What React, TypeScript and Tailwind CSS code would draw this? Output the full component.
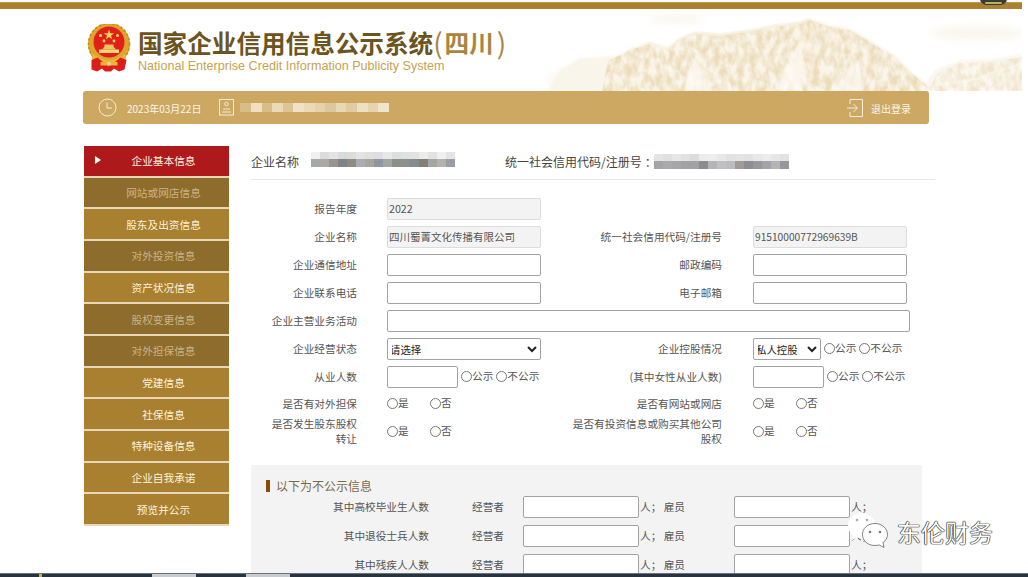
import React from "react";

const font = '"Noto Sans CJK SC", "Liberation Sans", sans-serif';

const menu: [string, number][] = [
  ["企业基本信息", 0], ["网站或网店信息", 2], ["股东及出资信息", 1], ["对外投资信息", 2],
  ["资产状况信息", 1], ["股权变更信息", 2], ["对外担保信息", 2], ["党建信息", 1],
  ["社保信息", 1], ["特种设备信息", 1], ["企业自我承诺", 1], ["预览并公示", 1],
];

function Pixels({ top, bottom, size = 9 }: { top: string[]; bottom: string[]; size?: number }) {
  return (
    <div className="flex flex-col">
      {[top, bottom].map((row, i) => (
        <div key={i} className="flex">
          {row.map((c, j) => (
            <div key={j} style={{ background: c, width: size, height: i === 0 ? 7 : 8 }} />
          ))}
        </div>
      ))}
    </div>
  );
}

function Radio({ label, className = "" }: { label: string; className?: string }) {
  return (
    <label className={"flex items-center text-[10.67px] leading-[14px] text-[#555] -translate-y-px " + className}>
      <input type="radio" name={label + className} className="m-0 h-[11px] w-[11px]" />
      {label}
    </label>
  );
}

function PublicRadios({ ml = "ml-[3px]" }: { ml?: string }) {
  return (
    <div className={"flex gap-[3px] " + ml}>
      <Radio label="公示" />
      <Radio label="不公示" />
    </div>
  );
}

function YesNo() {
  return (
    <div className="flex">
      <Radio label="是" className="w-[43px]" />
      <Radio label="否" />
    </div>
  );
}

const inputCls = "block h-[22px] rounded-[2px] border border-[#a3a3a3] bg-white px-0 text-[10.67px] text-[#444] outline-none";
const selectCls = "block h-[22px] rounded-[2px] border border-[#a3a3a3] bg-white px-0 indent-[-2px] text-[10.4px] text-[#222] outline-none";
const roCls = "block h-[22px] rounded-[2px] border border-[#dcdcdc] bg-[#f3f3f3] pb-[2px] pl-[1px] leading-[18px] text-[#555] outline-none";

function Row({ h = 28, children }: { h?: number; children: React.ReactNode }) {
  return <div className="flex items-center" style={{ height: h }}>{children}</div>;
}

function L1({ children }: { children: React.ReactNode }) {
  return <div className="mr-[30px] w-[106px] shrink-0 -translate-y-px text-right text-[10.67px] leading-[15px] text-[#555]">{children}</div>;
}
function L2({ children }: { children: React.ReactNode }) {
  return <div className="mr-[31px] w-[181px] shrink-0 -translate-y-px text-right text-[10.67px] leading-[15px] text-[#555]">{children}</div>;
}
function Cell({ children }: { children?: React.ReactNode }) {
  return <div className="flex w-[154px] shrink-0 items-center">{children}</div>;
}

function PanelRow({ label }: { label: string }) {
  return (
    <div className="flex h-[29.300px] items-center text-[10.67px] text-[#555]">
      <div className="mr-[43px] w-[178px] shrink-0 text-right">{label}</div>
      <div className="mr-[19px] w-[32px] shrink-0">经营者</div>
      <input className={inputCls + " w-[116px]"} />
      <div className="ml-[1px] w-[94px] shrink-0">人； 雇员</div>
      <input className={inputCls + " w-[116px]"} />
      <div className="ml-[1px]">人；</div>
    </div>
  );
}

function Emblem() {
  return (
    <svg width="44" height="48" viewBox="0 0 44 48" className="shrink-0">
      <circle cx="22" cy="20" r="21" fill="#e0a62c" />
      <circle cx="22" cy="20" r="20.5" fill="none" stroke="#c08a1e" strokeWidth="1.5" strokeDasharray="2.500 2" />
      <circle cx="22" cy="18" r="15.500" fill="#e2201a" />
      <polygon points="22,5.500 23.200,9.200 27.200,9.200 24,11.500 25.200,15.200 22,13 18.800,15.200 20,11.500 16.800,9.200 20.800,9.200" fill="#f8dc5a" />
      <circle cx="13.500" cy="11.500" r="1.500" fill="#f8dc5a" />
      <circle cx="30.500" cy="11.500" r="1.500" fill="#f8dc5a" />
      <circle cx="17" cy="17" r="1.400" fill="#f8dc5a" />
      <circle cx="27" cy="17" r="1.400" fill="#f8dc5a" />
      <path d="M15 25.500h14l-2.500-3v-2h-9v2z" fill="#edc561" />
      <rect x="12" y="25.500" width="20" height="3.500" fill="#f4d67c" />
      <path d="M6 30q16 12 32 0l1.500 5q-17.500 10-35 0z" fill="#eab53a" />
      <path d="M4.500 36l6-2.500 5.500 4.500h12l5.500-4.500 6 2.500-2 9.500-5.500 2-5-3-3 3h-6l-3-3-5 3-5.500-2z" fill="#dc1e1a" />
      <rect x="13.500" y="38" width="17" height="3.500" fill="#eab53a" />
      <circle cx="22" cy="39.700" r="2" fill="#f4d67c" />
    </svg>
  );
}

function Mountains() {
  return (
    <svg width="490" height="82" viewBox="0 0 490 82" className="absolute right-[6px] top-0">
      <defs>
        <filter id="soft"><feGaussianBlur stdDeviation="0.8" /></filter>
        <filter id="mist"><feGaussianBlur stdDeviation="4" /></filter>
        <filter id="rock" x="0" y="0" width="100%" height="100%">
          <feTurbulence type="fractalNoise" baseFrequency="0.16 0.09" numOctaves="3" seed="7" result="n" />
          <feColorMatrix in="n" type="matrix" values="0 0 0 0 0  0 0 0 0 0  0 0 0 0 0  2.400 0 0 0 -0.750" result="a" />
          <feComposite in="SourceGraphic" in2="a" operator="in" />
          <feGaussianBlur stdDeviation="0.7" />
        </filter>
      </defs>
      <g filter="url(#mist)">
        <ellipse cx="145" cy="10" rx="28" ry="2.500" fill="#f6efdf" />
        <ellipse cx="445" cy="24" rx="48" ry="6" fill="#faf5ea" />
        <ellipse cx="40" cy="72" rx="26" ry="10" fill="#fbf7ee" />
      </g>
      <g filter="url(#soft)">
        <path d="M16 82 L28 61 L48 49 L68 48 L88 46 L98 39 L118 33 L128 39 L136 39 L148 29 L163 23 L188 25 L218 21 L243 16 L268 13 L278 9 L298 16 L318 19 L338 31 L363 46 L378 61 L393 73 L400 82Z" fill="#faf5ea" />
        <path d="M388 82 L403 61 L428 51 L458 50 L490 45 L490 82Z" fill="#fbf7ee" />
      </g>
      <g filter="url(#rock)">
        <path d="M70 82 L76 52 L98 41 L118 35 L136 41 L148 31 L163 25 L188 27 L218 23 L243 18 L268 15 L278 11 L298 18 L318 21 L338 33 L363 48 L378 63 L393 75 L400 82Z" fill="#ecdcba" />
        <path d="M395 82 L406 64 L428 54 L458 53 L490 48 L490 82Z" fill="#f0e4ca" />
      </g>
      <g filter="url(#soft)">
        <path d="M108 41 L118 34 L136 40 L148 30 L163 24 L188 26 L218 22 L243 17 L268 14 L278 10" fill="none" stroke="#eee0c2" strokeWidth="1.500" strokeDasharray="2 1" />
        <path d="M152 82 L160 50 L172 60 L176 82Z" fill="#fdfbf6" fillOpacity="0.7" />
        <path d="M242 82 L262 42 L268 30 L274 70 L270 82Z" fill="#fdfbf6" fillOpacity="0.7" />
        <path d="M300 82 L325 50 L332 82Z" fill="#fdfbf6" fillOpacity="0.6" />
        <path d="M405 76 Q445 72 460 64 Q475 58 490 55" fill="none" stroke="#fdfbf6" strokeWidth="1.500" />
      </g>
    </svg>
  );
}

export default function App() {
  return (
    <div className="relative h-[577px] w-[1028px] overflow-hidden bg-white" style={{ fontFamily: font }}>
      <div className="pt-[2px]">
        <div className="mr-[6px] h-[7px] border-t border-[#c09a50] bg-[#ab8130]" />
      </div>

      <header className="relative flex h-[82px] items-start pl-[87px] pt-[15px]">
        <Mountains />
        <Emblem />
        <div className="relative ml-[7px] pt-[2px]">
          <div className="flex h-[32px] items-center whitespace-nowrap text-[24.6px] font-bold leading-[32px] text-[#6b5420]">
            国家企业信用信息公示系统
            <span className="flex items-center text-[#a8863f]">
              <span className="text-[28px] font-normal">(</span>
              <span className="ml-[2px]">四川</span>
              <span className="ml-[3px] text-[28px] font-normal">)</span>
            </span>
          </div>
          <div className="whitespace-nowrap text-[12.6px] leading-[16px] text-[#c7a24f]" style={{ fontFamily: '"Liberation Sans", sans-serif' }}>
            National Enterprise Credit Information Publicity System
          </div>
        </div>
      </header>

      <div className="ml-[83px] flex h-[33px] w-[846px] items-center rounded-[3px] bg-[#cda863] pl-[15px] pr-[18px] text-[10px] text-[#fbf5e8]">
        <svg width="19" height="19" viewBox="0 0 19 19" fill="none" stroke="#f6ecd8" strokeWidth="1">
          <circle cx="9.500" cy="9.500" r="8.500" />
          <path d="M9 4.500v5.500h5" />
        </svg>
        <span className="ml-[10px] translate-y-px">2023年03月22日</span>
        <svg width="15" height="17" viewBox="0 0 15 17" fill="none" stroke="#f6ecd8" strokeWidth="1" className="ml-[18px]">
          <rect x="0.500" y="0.500" width="14" height="15.500" />
          <circle cx="7.500" cy="5" r="1.800" />
          <path d="M4 10h7M3 13h9" />
        </svg>
        <div className="ml-[6px] flex">
          {["#d8bd85", "#efe0c0", "#d8bd85", "#eadab8", "#dcc494", "#f0e2c6", "#eadab8", "#e6d2aa", "#ddc89c", "#e8d8b6", "#e0cca2", "#eee0c4", "#e6d4ae", "#f0e4cc"].map((c, i) => (
            <div key={i} style={{ background: c, width: 10.600, height: 9 }} />
          ))}
        </div>
        <div className="flex-1" />
        <svg width="16" height="18" viewBox="0 0 16 18" fill="none" stroke="#f6ecd8" strokeWidth="1">
          <path d="M3 5V0.500h12.500v17H3V13" />
          <path d="M0 9h10M6.500 5l4 4-4 4" />
        </svg>
        <span className="ml-[8px] translate-y-px">退出登录</span>
      </div>

      <div className="mt-[22px] flex pl-[84px]">
        <nav className="w-[145px] shrink-0">
          {menu.map(([t, k]) => (
            <div
              key={t}
              className={
                "relative flex h-[31.670px] items-center justify-center border-b-[2px] border-[#e6d8b8] pl-[14px] pt-px text-[10.67px] " +
                (k === 0 ? "bg-[#ae1a1c] text-[#fff2e0]" : k === 1 ? "bg-[#a98030] text-[#fbf3dc]" : "bg-[#8e6c2b] text-[#c9b48a]")
              }
            >
              {k === 0 && <span className="absolute left-[11px] top-[10px] h-0 w-0 border-y-[4px] border-l-[6px] border-y-transparent border-l-white" />}
              {t}
            </div>
          ))}
        </nav>

        <main className="ml-[22px] w-[684px]">
          <div className="flex h-[34px] items-start border-b border-[#e8e8e8] pt-[6px] text-[12px] leading-[20px] text-[#444]">
            <span className="w-[60px] shrink-0">企业名称</span>
            <Pixels
              top={["#f0f0f0", "#dcdcdc", "#e4e4e4", "#d8dadc", "#dedcd8", "#e4e4e4", "#e2e0dc", "#dcdfe2", "#e8e8e4", "#dcdfe2", "#dfe2e2", "#e2e2e0", "#ececea", "#e2e2e2", "#f0f0f0", "#e4e4e8"]}
              bottom={["#a5a8a6", "#a9aaa5", "#9a9290", "#7f8488", "#8e8a84", "#a9adb0", "#a8a49e", "#8e96a0", "#a4a6a4", "#8f8f8a", "#8e908c", "#848c8e", "#847f74", "#a4a6a0", "#b4b2ac", "#9c9ea6"]}
            />
            <span className="ml-[50px] flex w-[149px] shrink-0 whitespace-nowrap">
              统一社会信用代码/注册号<span className="ml-[3px]">：</span>
            </span>
            <div className="mt-[2px]">
              <Pixels
                top={["#e4e4e6", "#e0e0e2", "#e6e6e8", "#e2e2e4", "#dcdcde", "#ececec", "#eeeeee", "#e8e8ea", "#e2e2e2", "#e4e4e6", "#e2e2e4", "#e8e8ea", "#ececee", "#e6e6e8", "#e2e2e2"]}
                bottom={["#a4a4a6", "#aaaaac", "#a6a6a8", "#a2a2a4", "#a2a2a4", "#8a8c8e", "#b4b4b6", "#c0c0c2", "#bcbcbe", "#a09c98", "#8e8e92", "#98989c", "#a4a4a8", "#b4b4b2", "#98989c"]}
              />
            </div>
          </div>

          <div className="pt-[15px]">
            <Row><L1>报告年度</L1><input readOnly value="2022" className={roCls + " w-[154px] text-[10.67px]"} /></Row>
            <Row>
              <L1>企业名称</L1>
              <input readOnly value="四川蜀菁文化传播有限公司" className={roCls + " w-[154px] text-[10.5px]"} />
              <L2>统一社会信用代码/注册号</L2>
              <input readOnly value="91510000772969639B" className={roCls + " w-[154px] text-[10.2px]"} />
            </Row>
            <Row>
              <L1>企业通信地址</L1>
              <input className={inputCls + " w-[154px]"} />
              <L2>邮政编码</L2>
              <input className={inputCls + " w-[154px]"} />
            </Row>
            <Row>
              <L1>企业联系电话</L1>
              <input className={inputCls + " w-[154px]"} />
              <L2>电子邮箱</L2>
              <input className={inputCls + " w-[154px]"} />
            </Row>
            <Row><L1>企业主营业务活动</L1><input className={inputCls + " w-[523px]"} /></Row>
            <Row>
              <L1>企业经营状态</L1>
              <select className={selectCls + " w-[154px]"} defaultValue="请选择"><option>请选择</option></select>
              <L2>企业控股情况</L2>
              <select className={selectCls + " w-[68px]"} defaultValue="私人控股"><option>私人控股</option></select>
              <PublicRadios />
            </Row>
            <Row>
              <L1>从业人数</L1>
              <Cell><input className={inputCls + " w-[71px]"} /><PublicRadios /></Cell>
              <L2>(其中女性从业人数)</L2>
              <input className={inputCls + " w-[71px]"} />
              <PublicRadios />
            </Row>
            <Row h={26}>
              <L1>是否有对外担保</L1>
              <Cell><YesNo /></Cell>
              <L2>是否有网站或网店</L2>
              <YesNo />
            </Row>
            <Row h={30}>
              <L1>是否发生股东股权<br />转让</L1>
              <Cell><YesNo /></Cell>
              <L2>是否有投资信息或购买其他公司<br />股权</L2>
              <YesNo />
            </Row>
          </div>

          <section className="mt-[18px] h-[120px] w-[671px] bg-[#f3f3f3] pt-[15px]">
            <div className="ml-[15px] flex h-[12px] items-center text-[12px] text-[#7a6a4a]">
              <span className="mr-[6px] h-[12px] w-[4px] bg-[#8a4a08]" />
              以下为不公示信息
            </div>
            <PanelRow label="其中高校毕业生人数" />
            <PanelRow label="其中退役士兵人数" />
            <PanelRow label="其中残疾人人数" />
          </section>
        </main>
      </div>

      <div className="absolute left-[847px] top-[512px] flex items-center">
        <svg width="42" height="36" viewBox="0 0 42 36">
          <path d="M15 1C7.500 1 1 6.500 1 13.500c0 4 2 7.500 5 10l-2 5 6-3c2 .7 4 1 6 1L28 10C26 5 21 1 15 1z" fill="#fff" />
          <path d="M28 11.500c-7.500 0-12.500 5-12.500 11s5 11 12.500 11c1.500 0 3-.2 4-.6l5 2.600-1-5c3-2 4.500-5 4.500-8 0-6-5.500-11-12.500-11z" fill="#fff" stroke="#666" strokeWidth="0.800" />
          <circle cx="10" cy="8" r="1.300" fill="#aaa" />
          <circle cx="20" cy="8" r="1.300" fill="#aaa" />
          <circle cx="23" cy="20" r="1.300" fill="#777" />
          <circle cx="33" cy="20" r="1.300" fill="#777" />
        </svg>
        <span className="ml-[8px] mt-[4px] whitespace-nowrap text-[24px] leading-[32px] text-white [text-shadow:0_0_1px_#000,0_0_1px_#000,0_0_1px_#000]">东伦财务</span>
      </div>

      <div className="absolute -top-[8px] left-[980px] flex h-[13px] w-[27px] items-end justify-center rounded-full bg-[#3a3a36] pb-[1.500px]">
        <div className="h-[2px] w-[17px] rounded-full bg-[#b5b55a]" />
      </div>
      <div className="absolute bottom-0 left-0 flex h-[4px] w-full border-t border-[#6a7278] bg-[#27343f]">
        <div className="ml-[39px] h-full w-[3px] bg-[#c9b23a]" />
        <div className="ml-[110px] h-full w-[44px] bg-[#c8ccd0]" />
        <div className="ml-[50px] h-full w-[44px] bg-[#c8ccd0]" />
      </div>
    </div>
  );
}
